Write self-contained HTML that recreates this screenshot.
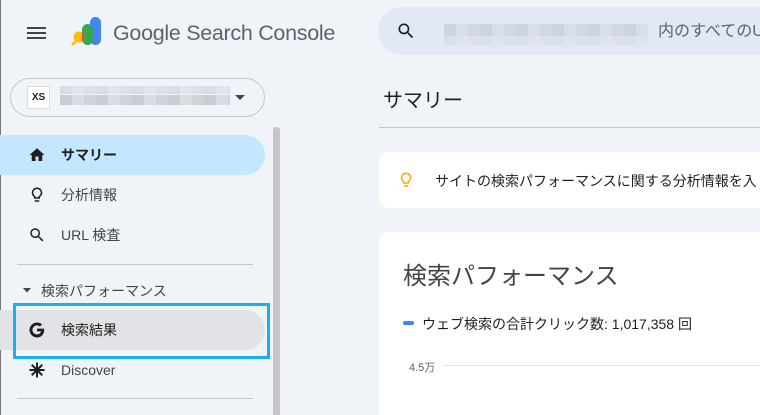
<!DOCTYPE html>
<html style="width:760px;height:415px;overflow:hidden"><head><meta charset="utf-8"><style>
*{margin:0;padding:0;box-sizing:border-box}
body{width:760px;height:415px;overflow:hidden;background:#f0f4f9;font-family:"Liberation Sans","Noto Sans CJK JP",sans-serif;color:#1f1f1f;position:relative}
.a{position:absolute}
.blur{background:repeating-linear-gradient(90deg,#c9ced6 0 12px,#d8dce3 12px 24px,#cfd3da 24px 36px)}
.nav{position:absolute;left:0;width:265px;height:40px;border-radius:0 20px 20px 0;font-size:14px;line-height:40px}
.nav span{position:absolute;left:61px}
.nav svg{position:absolute;left:28px;top:11px}
</style></head><body>
<div class="a" style="left:0;top:0;width:1px;height:415px;background:#777"></div>
<svg class="a" style="left:27px;top:26px" width="20" height="14"><rect y="1" width="19" height="2" fill="#444"/><rect y="6" width="19" height="2" fill="#444"/><rect y="11" width="19" height="2" fill="#444"/></svg>
<svg class="a" style="left:68px;top:16px" width="34" height="32" viewBox="0 0 34 32">
<rect x="22" y="1" width="11" height="28" rx="5.5" fill="#4285f4"/>
<rect x="14" y="8" width="11" height="21" rx="5.5" fill="#34a853"/>
<line x1="4" y1="29" x2="9" y2="24" stroke="#fbbc04" stroke-width="2.5"/>
<circle cx="11" cy="21" r="5.5" fill="#fbbc04"/>
<path d="M14 16.5 A5.5 5.5 0 0 1 14 25.5 Z" fill="#ea4335"/>
</svg>
<div class="a" style="left:113px;top:21px;font-size:21.5px;color:#5f6368;letter-spacing:-0.3px">Google Search Console</div>
<div class="a" style="left:10px;top:78px;width:255px;height:39px;border:1px solid #c4c7c5;border-radius:20px"></div>
<div class="a" style="left:27px;top:86px;width:23px;height:23px;background:#fff;border:1px solid #ddd;font-size:10px;font-weight:bold;text-align:center;line-height:21px">XS</div>
<div class="a blur" style="left:60px;top:86px;width:170px;height:8px;opacity:.6"></div>
<div class="a blur" style="left:60px;top:95px;width:170px;height:10px"></div>
<svg class="a" style="left:235px;top:95px" width="10" height="5"><path d="M0 0h10L5 5z" fill="#444"/></svg>
<div class="a" style="left:273px;top:127px;width:7px;height:290px;background:#c6c6c6;border-radius:3px"></div>
<div class="nav" style="top:135px;background:#c2e7ff;font-weight:bold"><svg width="18" height="18" viewBox="0 0 24 24"><path d="M10 20v-6h4v6h5v-8h3L12 3 2 12h3v8z" fill="#1f1f1f"/></svg><span>サマリー</span></div>
<div class="nav" style="top:175px;color:#444"><svg width="18" height="18" viewBox="0 0 24 24"><path d="M9 21h6v-2H9zm3-19a7 7 0 0 0-4 12.7V17h8v-2.3A7 7 0 0 0 12 2zm2.9 11.1-.9.6V15h-4v-1.3l-.9-.6a5 5 0 1 1 5.8 0z" fill="#1f1f1f"/></svg><span>分析情報</span></div>
<div class="nav" style="top:215px;color:#444"><svg width="18" height="18" viewBox="0 0 24 24"><path d="M15.5 14h-.71l-.27-.27A6.47 6.47 0 0 0 16 9.5 6.5 6.5 0 1 0 9.5 16c1.61 0 3.09-.59 4.23-1.57l.27.27v.79l5 4.99L20.49 19l-4.99-5zm-6 0C7.01 14 5 11.99 5 9.5S7.01 5 9.5 5 14 7.01 14 9.5 11.99 14 9.5 14z" fill="#1f1f1f"/></svg><span>URL 検査</span></div>
<div class="a" style="left:17px;top:264px;width:236px;height:1px;background:#c4c7c5"></div>
<svg class="a" style="left:23px;top:288px" width="8" height="5"><path d="M0 0h8L4 4.5z" fill="#444"/></svg>
<div class="a" style="left:41px;top:281px;font-size:14px;color:#444">検索パフォーマンス</div>
<div class="nav" style="top:310px;background:#e1e3e6;color:#1f1f1f"><svg width="18" height="18" viewBox="0 0 24 24"><path d="M21.4 10.2H12v3.7h5.4c-.5 2.5-2.6 4-5.4 4a6 6 0 1 1 3.9-10.5l2.8-2.8A10 10 0 1 0 12 22c5.2 0 9.6-3.8 9.6-10 0-.6-.1-1.2-.2-1.8z" fill="#1f1f1f"/></svg><span>検索結果</span></div>
<div class="a" style="left:13px;top:303px;width:257px;height:56px;border:3px solid #1ab0ee"></div>
<div class="nav" style="top:350px;color:#444"><svg width="18" height="18" viewBox="0 0 24 24"><path d="M12 2v20M2 12h20M5 5l14 14M19 5 5 19" stroke="#1f1f1f" stroke-width="2.6"/></svg><span>Discover</span></div>
<div class="a" style="left:17px;top:398px;width:236px;height:1px;background:#c4c7c5"></div>
<div class="a" style="left:378px;top:7px;width:400px;height:48px;background:#e1e9f7;border-radius:24px"></div>
<svg class="a" style="left:396px;top:21px" width="20" height="20" viewBox="0 0 24 24"><path d="M15.5 14h-.71l-.27-.27A6.47 6.47 0 0 0 16 9.5 6.5 6.5 0 1 0 9.5 16c1.61 0 3.09-.59 4.23-1.57l.27.27v.79l5 4.99L20.49 19l-4.99-5zm-6 0C7.01 14 5 11.99 5 9.5S7.01 5 9.5 5 14 7.01 14 9.5 11.99 14 9.5 14z" fill="#1f1f1f"/></svg>
<div class="a blur" style="left:444px;top:24px;width:204px;height:12px;opacity:.8"></div>
<div class="a blur" style="left:444px;top:36px;width:204px;height:9px;opacity:.35"></div>
<div class="a" style="left:658px;top:20px;font-size:16px;line-height:24px;color:#5f6368;white-space:nowrap">内のすべてのU</div>
<div class="a" style="left:383px;top:84px;font-size:20px;color:#1f1f1f">サマリー</div>
<div class="a" style="left:379px;top:127px;width:381px;height:1px;background:#c4c7c5"></div>
<div class="a" style="left:379px;top:152px;width:400px;height:56px;background:#fff;border-radius:10px"></div>
<svg class="a" style="left:397px;top:169px" width="18" height="22" viewBox="0 0 24 24"><path d="M9 21h6v-2H9zm3-19a7 7 0 0 0-4 12.7V17h8v-2.3A7 7 0 0 0 12 2zm2.9 11.1-.9.6V15h-4v-1.3l-.9-.6a5 5 0 1 1 5.8 0z" fill="#f9ab00"/></svg>
<div class="a" style="left:435px;top:171px;font-size:14px;white-space:nowrap">サイトの検索パフォーマンスに関する分析情報を入</div>
<div class="a" style="left:379px;top:232px;width:400px;height:183px;background:#fff;border-radius:10px 0 0 0"></div>
<div class="a" style="left:403px;top:256px;font-size:24px;color:#444;white-space:nowrap">検索パフォーマンス</div>
<div class="a" style="left:403px;top:321px;width:11px;height:4px;background:#4285f4;border-radius:2px"></div>
<div class="a" style="left:422px;top:314px;font-size:14px;white-space:nowrap">ウェブ検索の合計クリック数: 1,017,358 回</div>
<div class="a" style="left:409px;top:359px;font-size:11px;color:#5f6368">4.5万</div>
<div class="a" style="left:444px;top:365px;width:316px;height:1px;background:#e3e3e3"></div>
</body></html>
